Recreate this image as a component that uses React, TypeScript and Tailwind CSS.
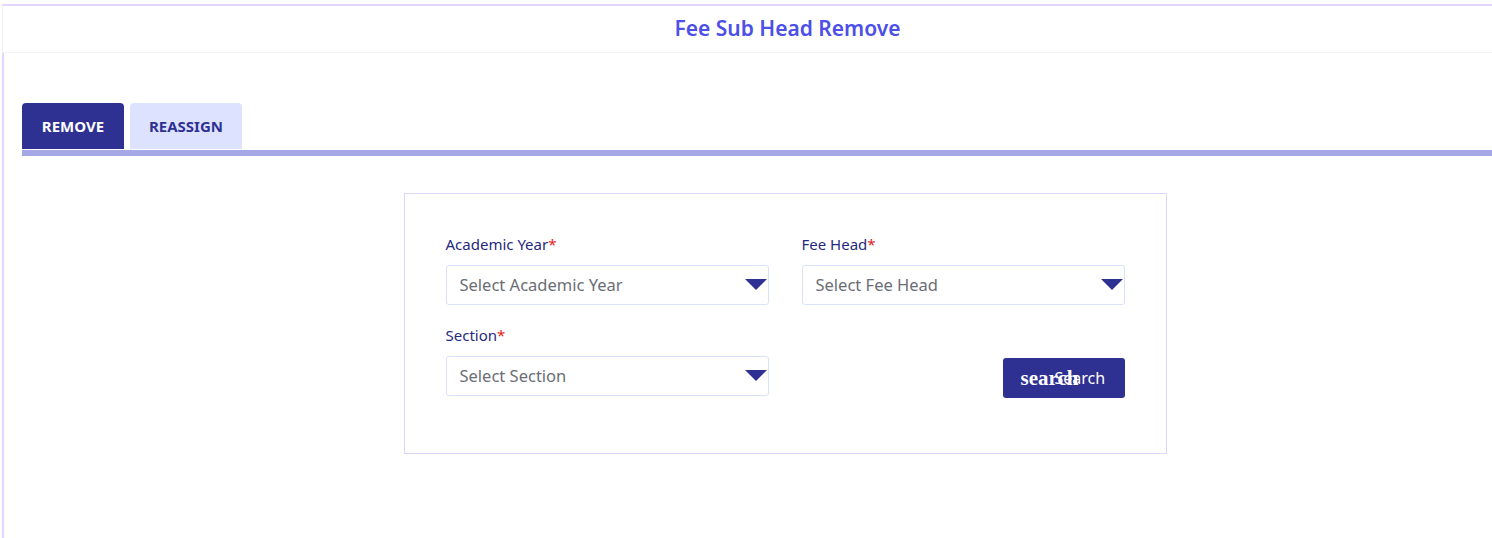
import { useState } from 'react'

const Caret = () => (
  <svg width="22" height="12" viewBox="0 0 22 12" className="shrink-0">
    <path d="M0 0 H22 L11 11 Z" fill="#2e3192" />
  </svg>
)

const Field = ({ label, placeholder }: { label: string; placeholder: string }) => (
  <div className="flex flex-col">
    <label className="text-[15px] leading-[20px] text-[#1f2a80] mb-[11px]">
      {label}
      <span className="text-[#e11d1d]">*</span>
    </label>
    <div className="h-[40px] w-[323px] rounded-[3px] border border-[#dbe1fb] bg-white flex items-center justify-between pl-[13px] pr-[1px]">
      <span className="text-[16.5px] text-[#6b6e75]">{placeholder}</span>
      <Caret />
    </div>
  </div>
)

export default function App() {
  const [tab, setTab] = useState('remove')

  return (
    <div className="w-[1492px] h-[538px] bg-white overflow-hidden font-['Noto_Sans',_sans-serif] pt-[4px]">
      <div className="ml-[2px] h-[49px] border-t-2 border-[#e2d6ff] border-l border-l-[#f0f0f0] border-b border-b-[#f5f5f5] flex items-center justify-center">
        <h1 className="text-[21px] font-semibold text-[#4c4fe8] pl-[80px] pb-[1px]">Fee Sub Head Remove</h1>
      </div>

      <div className="ml-[2px] h-[485px] border-l-2 border-[#e2d6ff] pl-[18px] pt-[50px]">
        <div className="flex gap-[6px] items-end">
          <button
            onClick={() => setTab('remove')}
            className={`h-[46px] w-[102px] rounded-t-[4px] text-[15px] font-bold ${tab === 'remove' ? 'bg-[#2e3192] text-white' : 'bg-[#dde2ff] text-[#2e3192]'}`}
          >
            REMOVE
          </button>
          <button
            onClick={() => setTab('reassign')}
            className={`h-[46px] w-[112px] rounded-t-[4px] text-[15px] font-bold ${tab === 'reassign' ? 'bg-[#2e3192] text-white' : 'bg-[#dde2ff] text-[#2e3192]'}`}
          >
            REASSIGN
          </button>
        </div>
        <div className="h-[6px] bg-[#a5a8e6] mt-[1px]" />

        <div className="flex justify-center pl-[56px] mt-[37px]">
          <div className="w-[763px] h-[261px] border border-[#dcd6fb] pl-[41px] pt-[40px]">
            <div className="grid grid-cols-[323px_323px] gap-x-[33px] gap-y-[20px]">
              <Field label="Academic Year" placeholder="Select Academic Year" />
              <Field label="Fee Head" placeholder="Select Fee Head" />
              <Field label="Section" placeholder="Select Section" />
              <div className="flex items-end justify-end">
                <button className="relative top-[2px] h-[40px] w-[122px] rounded-[3px] bg-[#2e3192] text-white text-[16px] flex items-center">
                  <span className="absolute left-[18px] top-[8px] font-['Liberation_Serif',_serif] font-bold text-[21px] leading-[24px]">search</span>
                  <span className="absolute left-[52px] top-[9px] leading-[22px]">Search</span>
                </button>
              </div>
            </div>
          </div>
        </div>
      </div>
    </div>
  )
}
